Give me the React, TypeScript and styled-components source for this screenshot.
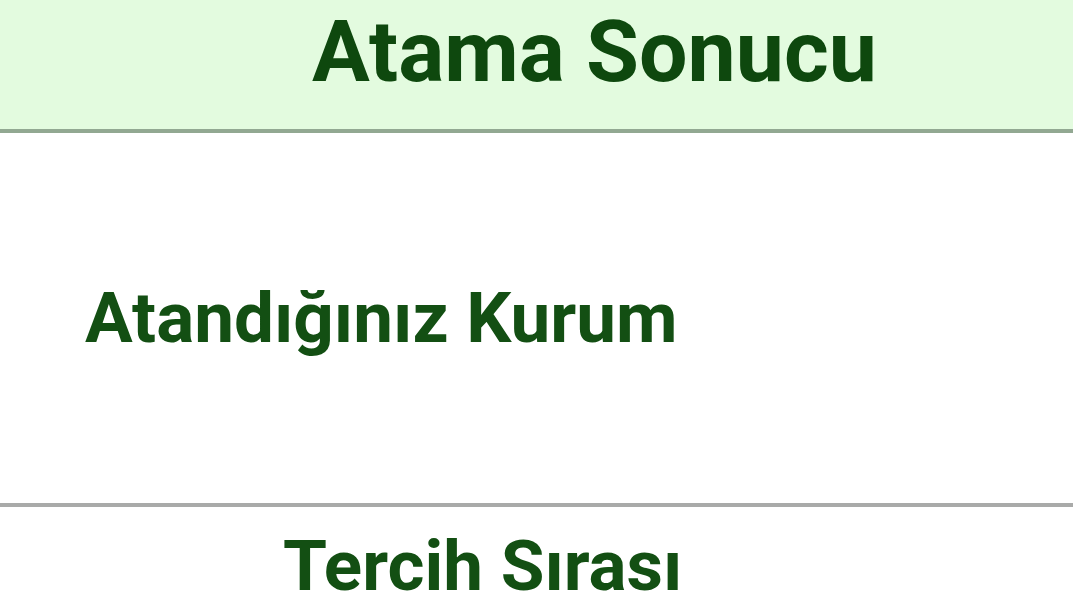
import React from 'react';
import styled, { createGlobalStyle } from 'styled-components';

const GlobalStyle = createGlobalStyle`
  html, body {
    margin: 0;
    padding: 0;
    background: #ffffff;
    overflow: hidden;
  }
`;

const Page = styled.div`
  width: 1073px;
  height: 599px;
  display: flex;
  flex-direction: column;
  font-family: Roboto, "Liberation Sans", sans-serif;
  color: #134f13;
  background: #ffffff;
`;

const Header = styled.div`
  height: 133px;
  flex-shrink: 0;
  display: flex;
  align-items: flex-start;
  justify-content: center;
  padding: 9px 0 0 116px;
  box-sizing: border-box;
  background: #e3fbdf;
  border-bottom: 4px solid #92a892;
`;

const Title = styled.h1`
  margin: 0;
  font-size: 86px;
  font-weight: 700;
  line-height: 1;
  color: #0e480e;
`;

const Row = styled.div<{ $height: number; $indent: number; $top?: number; $last?: boolean }>`
  height: ${p => p.$height}px;
  flex-shrink: 0;
  display: flex;
  align-items: ${p => (p.$top !== undefined ? 'flex-start' : 'center')};
  padding-left: ${p => p.$indent}px;
  padding-top: ${p => p.$top ?? 0}px;
  box-sizing: border-box;
  border-bottom: ${p => (p.$last ? 'none' : '4px solid #a9aaa9')};
`;

const Label = styled.span`
  font-size: 71px;
  font-weight: 700;
  line-height: 0.9;
  white-space: nowrap;
`;

const App: React.FC = () => {
  return (
    <Page>
      <GlobalStyle />
      <Header>
        <Title>Atama Sonucu</Title>
      </Header>
      <Row $height={374} $indent={85}>
        <Label>Atandığınız Kurum</Label>
      </Row>
      <Row $height={92} $indent={283} $top={27} $last>
        <Label>Tercih Sırası</Label>
      </Row>
    </Page>
  );
};

export default App;
